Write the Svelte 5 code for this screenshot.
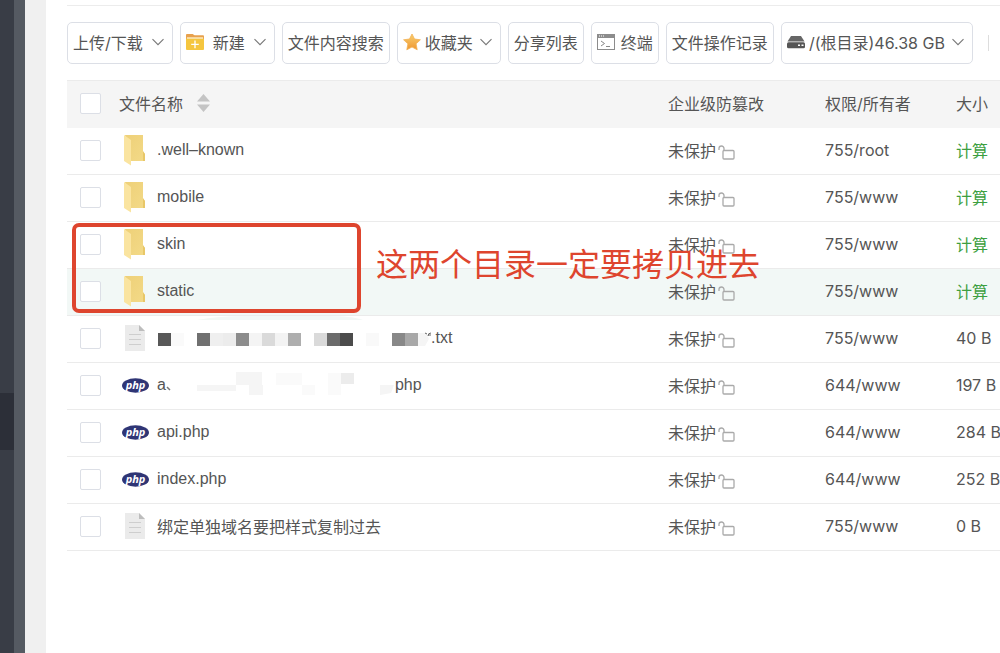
<script lang="ts">
    type FileRow = {
        name: string;
        icon: "folder" | "text" | "php";
        owner: string;
        size: string;
        mask?: "long" | "short";
        active?: boolean;
    };

    const files: FileRow[] = [
        { name: ".well–known", icon: "folder", owner: "755/root", size: "" },
        { name: "mobile", icon: "folder", owner: "755/www", size: "" },
        { name: "skin", icon: "folder", owner: "755/www", size: "" },
        { name: "static", icon: "folder", owner: "755/www", size: "", active: true },
        { name: ".txt", icon: "text", owner: "755/www", size: "40 B", mask: "long" },
        { name: "php", icon: "php", owner: "644/www", size: "197 B", mask: "short" },
        { name: "api.php", icon: "php", owner: "644/www", size: "284 B" },
        { name: "index.php", icon: "php", owner: "644/www", size: "252 B" },
        { name: "绑定单独域名要把样式复制过去", icon: "text", owner: "755/www", size: "0 B" },
    ];

    // mosaic cells: column, colour
    const longMask: [number, string][] = [
        [0, "#585858"],
        [1, "#fafafa"],
        [3, "#707070"],
        [4, "#efefef"],
        [5, "#ececec"],
        [6, "#8c8c8c"],
        [7, "#f4f4f4"],
        [8, "#dadada"],
        [9, "#f3f3f3"],
        [10, "#aeaeae"],
        [12, "#dadada"],
        [13, "#6b6b6b"],
        [14, "#4c4c4c"],
        [16, "#f9f9f9"],
        [18, "#888888"],
        [19, "#a8a8a8"],
    ];
</script>

{#snippet chevron()}
    <svg class="chevron" viewBox="0 0 12 8" aria-hidden="true">
        <path d="M.5 1.200l5.500 5.500 5.500-5.500" fill="none" stroke="#777" stroke-width="1.100" />
    </svg>
{/snippet}

<div class="layout">
    <nav class="sidebar">
        <a href="#files" aria-label="文件"></a>
    </nav>
    <div class="edge"></div>
    <div class="gutter"></div>
    <main>
        <div class="path-bar"></div>
        <div class="toolbar">
            <button>上传/下载 {@render chevron()}</button>
            <button>
                <svg class="icon new-icon" viewBox="0 0 19 17" aria-hidden="true">
                    <path d="M0 1a1 1 0 0 1 1-1h6l2 1.500h9a1 1 0 0 1 1 1V6H0z" fill="#e8a14d" />
                    <path d="M1 3.500h17V6H1z" fill="#fbe9c0" />
                    <path d="M0 5h19v11a1 1 0 0 1-1 1H1a1 1 0 0 1-1-1z" fill="#f5c63f" />
                    <path d="M9.500 7v8M5.500 11h8" stroke="#fff" stroke-width="1.400" />
                </svg>
                新建 {@render chevron()}
            </button>
            <button>文件内容搜索</button>
            <button class="tight">
                <svg class="icon" viewBox="0 0 18 18" aria-hidden="true">
                    <defs>
                        <linearGradient id="star" x1="0" y1="0" x2="0" y2="1">
                            <stop offset="0" stop-color="#f8cf70" />
                            <stop offset="1" stop-color="#ef9630" />
                        </linearGradient>
                    </defs>
                    <path
                        d="M9 1l2.500 5 5.900.8-4.300 4 1.100 6L9 14l-5.200 2.800 1.100-6-4.300-4 5.900-.8z"
                        fill="url(#star)"
                        stroke="#f2b354"
                        stroke-width=".8"
                        stroke-linejoin="round"
                    />
                </svg>
                收藏夹 {@render chevron()}
            </button>
            <button>分享列表</button>
            <button>
                <svg class="icon" viewBox="0 0 18 16" aria-hidden="true">
                    <rect x=".5" y=".5" width="17" height="15" fill="#fff" stroke="#8c8c8c" />
                    <path d="M0 0h18v4H0z" fill="#8c8c8c" />
                    <path d="M2 2h1M4 2h1M6 2h1" stroke="#fff" />
                    <path d="M4 7l3.500 2.500L4 12M9 12.500h4" fill="none" stroke="#888" />
                </svg>
                终端
            </button>
            <button>文件操作记录</button>
            <button class="tight">
                <svg class="icon" viewBox="0 0 18 14" aria-hidden="true">
                    <path d="M4 1h10l3.500 5.500H.5z" fill="#666" />
                    <rect y="7.200" width="18" height="6" rx="1.500" fill="#555" />
                    <path d="M11 10.300h2M14.500 10.300h2" stroke="#fff" stroke-width="1.600" />
                </svg>
                <span>/(根目录)46.38 GB</span>
                {@render chevron()}
            </button>
            <span class="divider"></span>
        </div>

        <div class="file-list">
            <table>
                <colgroup>
                    <col class="col-check" />
                    <col />
                    <col class="col-protect" />
                    <col class="col-owner" />
                    <col class="col-size" />
                </colgroup>
                <thead>
                    <tr>
                        <th><input type="checkbox" aria-label="全选" /></th>
                        <th>
                            <span class="sortable">
                                文件名称
                                <svg width="13" height="18" viewBox="0 0 13 18" aria-hidden="true">
                                    <path d="M6.500 0L13 7.500H0zM0 10.500h13L6.500 18z" fill="#c4c4c4" />
                                </svg>
                            </span>
                        </th>
                        <th>企业级防篡改</th>
                        <th>权限/所有者</th>
                        <th>大小</th>
                    </tr>
                </thead>
                <tbody>
                    {#each files as file}
                        <tr class:active={file.active}>
                            <td><input type="checkbox" aria-label={file.name} /></td>
                            <td>
                                <div class="name">
                                    <span class="file-icon">
                                        {#if file.icon === "folder"}
                                            <svg width="22" height="32" viewBox="0 0 22 32" aria-hidden="true">
                                                <defs>
                                                    <linearGradient id="back" x1="0" y1="0" x2="1" y2="1">
                                                        <stop offset="0" stop-color="#eed078" />
                                                        <stop offset="1" stop-color="#f3da88" />
                                                    </linearGradient>
                                                </defs>
                                                <path d="M1 1h18v17l2 2v7H6z" fill="url(#back)" />
                                                <path d="M19 17l2 3v7h-2z" fill="#e8c768" />
                                                <path d="M0 1l7 5v25.500L0 27z" fill="#fae4a0" />
                                            </svg>
                                        {:else if file.icon === "text"}
                                            <svg width="20" height="26" viewBox="0 0 20 26" aria-hidden="true">
                                                <path d="M0 0h14l6 6v20H0z" fill="#ebebeb" />
                                                <path d="M14 0l6 6h-6z" fill="#bdbdbd" />
                                                <path d="M4 9.500h12M4 14.500h12M4 19.500h12" stroke="#cecece" />
                                            </svg>
                                        {:else}
                                            <svg width="27" height="15" viewBox="0 0 27 15" aria-hidden="true">
                                                <ellipse cx="13.500" cy="7.500" rx="13.500" ry="7.200" fill="#2f3575" />
                                                <text x="13.500" y="10.500" text-anchor="middle">php</text>
                                            </svg>
                                        {/if}
                                    </span>
                                    {#if file.mask === "long"}
                                        <svg class="mask" width="274" height="44" viewBox="0 0 274 44" aria-hidden="true">
                                            <path d="M40 4Q60 0 90 0h80q25 0 36 4z" fill="#f2f8f6" />
                                            {#each longMask as [col, fill]}
                                                <rect x={1 + col * 13} y="17" width="13" height="13" {fill} />
                                            {/each}
                                            <path d="M261 17h8l3 6-4 7h-7z" fill="#f5f5f5" />
                                            <path d="M268 17l2 1M271 20q0-3 3-3M271 19h3" fill="none" stroke="#666" />
                                        </svg>
                                    {:else if file.mask === "short"}
                                        <span>a</span>
                                        <svg class="mask" width="229" height="44" viewBox="0 0 229 44" aria-hidden="true">
                                            <path d="M1 24l3 3" stroke="#777" stroke-width="1.500" />
                                            <path d="M31 22h39v6H31zM70 9h26v13H70zM83 22h14v10H83z" fill="#f5f5f5" />
                                            <path d="M110 10h26v12h-26zM136 22h13v10h-13zM162 10h13v22h-13z" fill="#fafafa" />
                                            <path d="M175 10h13v11h-13z" fill="#ececec" />
                                            <path d="M214 22h14l-3 8-11 2z" fill="#f5f5f5" />
                                        </svg>
                                    {/if}
                                    <span>{file.name}</span>
                                </div>
                            </td>
                            <td>
                                <span class="protect">
                                    未保护
                                    <svg width="17" height="15" viewBox="0 0 17 15" aria-hidden="true">
                                        <rect x="5" y="5.500" width="11" height="8.500" rx="1" />
                                        <path d="M1 5V3.500a2.500 2.500 0 0 1 5 0V5" />
                                    </svg>
                                </span>
                            </td>
                            <td>{file.owner}</td>
                            <td>
                                {#if file.size}
                                    {file.size}
                                {:else}
                                    <a href="#size">计算</a>
                                {/if}
                            </td>
                        </tr>
                    {/each}
                </tbody>
            </table>
            <div class="mark"></div>
            <p class="note">这两个目录一定要拷贝进去</p>
        </div>
    </main>
</div>

<style>
    :global(body) {
        margin: 0;
        background: #fff;
    }
    .layout {
        display: flex;
        min-height: 100vh;
        overflow: hidden;
        color: #555;
        font-family: Inter, "Noto Sans CJK SC", sans-serif;
        font-size: 16px;
    }
    .sidebar {
        flex: 0 0 14px;
        padding-top: 393px;
        box-sizing: border-box;
        background: #393d46;
    }
    .sidebar a {
        display: block;
        height: 57px;
        background: #2c2f38;
    }
    .edge {
        flex: 0 0 11px;
        background: #555a62;
    }
    .gutter {
        flex: 0 0 21px;
        background: #f0f0f0;
    }
    main {
        flex: 1;
        min-width: 0;
        padding-left: 21px;
    }
    .path-bar {
        height: 5px;
        border-bottom: 1px solid #ececec;
    }
    .toolbar {
        display: flex;
        align-items: center;
        gap: 7px;
        padding: 16px 0;
    }
    button {
        display: flex;
        flex: none;
        align-items: center;
        gap: 6px;
        box-sizing: border-box;
        height: 42px;
        padding: 0 5px 2px;
        border: 1px solid #dcdfe6;
        border-radius: 5px;
        background: #fff;
        color: #555;
        font: inherit;
        white-space: nowrap;
        cursor: pointer;
    }
    button.tight {
        gap: 4px;
    }
    .icon {
        width: 18px;
        height: 18px;
    }
    .new-icon {
        margin-right: 3px;
    }
    .chevron {
        width: 12px;
        height: 8px;
        margin: 0 3px;
    }
    .divider {
        flex: none;
        width: 1px;
        height: 16px;
        margin-left: 8px;
        background: #ddd;
    }
    .file-list {
        position: relative;
    }
    table {
        width: 100%;
        table-layout: fixed;
        border-collapse: separate;
        border-spacing: 0;
    }
    .col-check {
        width: 52px;
    }
    .col-protect {
        width: 157px;
    }
    .col-owner {
        width: 131px;
    }
    .col-size {
        width: 44px;
    }
    th,
    td {
        box-sizing: border-box;
        height: 47px;
        padding: 0 0 2px;
        border-bottom: 1px solid #ebebeb;
        font-weight: 400;
        text-align: left;
        white-space: nowrap;
    }
    th {
        height: 48px;
        border-top: 1px solid #ebebeb;
        border-bottom-color: #f5f5f5;
        background: #f5f5f5;
    }
    .active td {
        background: #f2f8f6;
    }
    input {
        display: block;
        appearance: none;
        box-sizing: border-box;
        width: 21px;
        height: 21px;
        margin: 0 0 0 13px;
        border: 1px solid #dcdfe6;
        border-radius: 2px;
        background: #fff;
    }
    .sortable {
        display: flex;
        align-items: center;
        gap: 14px;
    }
    .name {
        display: flex;
        align-items: center;
        height: 44px;
        font-family: "Liberation Sans", "Noto Sans CJK SC", sans-serif;
    }
    .file-icon {
        display: flex;
        flex: 0 0 32px;
        justify-content: center;
        margin-right: 6px;
    }
    .file-icon text {
        fill: #fff;
        font: italic bold 11px "Open Sans", sans-serif;
    }
    .mask {
        flex: none;
    }
    .protect {
        display: flex;
        align-items: center;
        gap: 2px;
    }
    .protect svg {
        margin-top: 4px;
        fill: none;
        stroke: #aaa;
        stroke-width: 1.3;
    }
    td a {
        color: #3c9f40;
        text-decoration: none;
    }
    .mark {
        position: absolute;
        top: 143px;
        left: 5px;
        box-sizing: border-box;
        width: 289px;
        height: 90px;
        border: 4px solid #de452e;
        border-radius: 7px;
    }
    .note {
        position: absolute;
        top: 161px;
        left: 309px;
        margin: 0;
        color: #de452e;
        font-size: 32px;
        line-height: 48px;
        white-space: nowrap;
    }
</style>
